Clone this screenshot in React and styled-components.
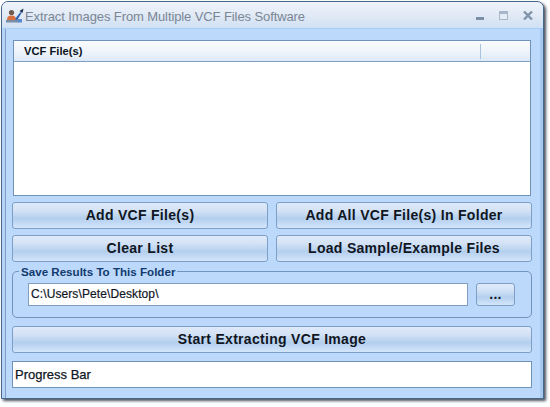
import React from "react";
import styled, { createGlobalStyle } from "styled-components";

const Global = createGlobalStyle`
  html, body { margin: 0; padding: 0; background: #fff; width: 550px; height: 407px; overflow: hidden; }
  #root { width: 550px; height: 407px; }
`;

const Page = styled.div`
  width: 550px;
  height: 407px;
  padding: 1px 0 0 1px;
  box-sizing: border-box;
  font-family: "Liberation Sans", Arial, sans-serif;
`;

const Win = styled.div`
  width: 543px;
  height: 398px;
  box-sizing: border-box;
  border: 1px solid #46668a;
  border-radius: 7px 7px 0 0;
  background: #bcd8fb;
  box-shadow: 2px 2px 3px rgba(30, 40, 55, 0.8);
  display: flex;
  flex-direction: column;
  overflow: hidden;
`;

const TitleBar = styled.div`
  height: 27px;
  flex: none;
  box-sizing: border-box;
  display: flex;
  align-items: center;
  padding: 0 10px 0 4px;
  background: linear-gradient(#eef3fa 0%, #e3ebf6 45%, #d9e5f4 75%, #cfe0f6 100%);
  border-bottom: 1px solid #a9cdf5;
`;

const Title = styled.span`
  margin-left: 1px;
  padding-top: 2px;
  flex: 1;
  font-size: 13px;
  letter-spacing: -0.1px;
  color: #7a8694;
  white-space: nowrap;
`;

const Controls = styled.div`
  display: flex;
  align-items: center;
  gap: 15px;
  margin-top: 1px;
`;

const Client = styled.div`
  flex: 1;
  border-left: 3px solid #b5d2f7;
  border-right: 3px solid #a8c8f2;
  padding: 11px 8px 9px 7px;
  display: flex;
  flex-direction: column;
  box-shadow: inset 1px 0 0 #7f9fc6;
`;

const List = styled.div`
  height: 156px;
  margin: 0 1px;
  box-sizing: border-box;
  border: 1px solid #6f92b8;
  background: #fff;
`;

const ListHead = styled.div`
  height: 21px;
  box-sizing: border-box;
  display: flex;
  align-items: center;
  background: linear-gradient(#f9fbfe 0%, #eef4fb 55%, #dde9f7 100%);
  border-bottom: 1px solid #7f9fc0;
`;

const HeadCell = styled.div`
  flex: ${(p) => (p.$grow ? 1 : "none")};
  width: ${(p) => (p.$grow ? "auto" : "49px")};
  height: 15px;
  padding-left: 10px;
  box-sizing: border-box;
  font-size: 11.2px;
  font-weight: bold;
  line-height: 15px;
  color: #0c1420;
  border-right: ${(p) => (p.$grow ? "1px solid #a9c3df" : "none")};
`;

const ButtonGrid = styled.div`
  display: grid;
  grid-template-columns: 256px 256px;
  column-gap: 8px;
  row-gap: 6px;
  margin-top: 6px;
`;

const Btn = styled.div`
  height: ${(p) => p.$h || 27}px;
  width: ${(p) => (p.$w ? `${p.$w}px` : "auto")};
  box-sizing: border-box;
  border: 1px solid #7d9fc6;
  border-radius: 3px;
  display: flex;
  align-items: center;
  justify-content: center;
  font-size: 14px;
  font-weight: bold;
  letter-spacing: 0.3px;
  color: #10161f;
  padding-bottom: 2px;
  background: linear-gradient(#dfeafa 0%, #d3e2f5 30%, #b4cfee 62%, #c4daf5 82%, #d4e6fb 100%);
`;

const Group = styled.div`
  position: relative;
  margin-top: 9px;
  height: 47px;
  box-sizing: border-box;
  border: 1px solid #7295bd;
  border-radius: 5px;
  display: flex;
  align-items: center;
  gap: 8px;
  padding: 0 16px 0 15px;
`;

const Legend = styled.span`
  position: absolute;
  left: 6px;
  top: -8px;
  padding: 0 2px;
  background: #bcd8fb;
  font-size: 11.6px;
  font-weight: bold;
  line-height: 15px;
  color: #123a6e;
`;

const PathInput = styled.div`
  width: 440px;
  height: 23px;
  box-sizing: border-box;
  border: 1px solid #7f9fc0;
  background: #fff;
  padding-left: 2px;
  font-size: 12px;
  line-height: 21px;
  font-weight: 500;
  letter-spacing: 0.1px;
  color: #10161f;
  -webkit-text-stroke: 0.2px #10161f;
`;

const StartWrap = styled.div`
  margin-top: 8px;
`;

const Progress = styled.div`
  margin-top: 8px;
  height: 27px;
  box-sizing: border-box;
  border: 1px solid #6f92b8;
  background: #fff;
  padding-left: 2px;
  font-size: 13px;
  line-height: 25px;
  color: #10161f;
  -webkit-text-stroke: 0.25px #10161f;
`;

const AppIcon = () => (
  <svg width="18" height="15" viewBox="0 0 18 15">
    <circle cx="5.5" cy="4.5" r="2.6" fill="#6f5a50" />
    <path d="M1 12c0-3.5 1.8-4.6 4.5-4.6S10 8.5 10 12z" fill="#d8703f" />
    <path d="M0 12h13v2.5H0z" fill="#7a8da6" />
    <path d="M9 11l5.5-7 1 1L11 12.5z" fill="#2a62b6" />
    <path d="M13.5 3L17.5 0.5 16.5 5z" fill="#1b2a44" />
    <path d="M12 11h4v3.5h-4z" fill="#5b8ad0" />
  </svg>
);

const WinControls = () => (
  <Controls>
    <svg width="8" height="9" viewBox="0 0 8 9">
      <rect x="0" y="6" width="8" height="3" fill="#7d8fa6" />
    </svg>
    <svg width="9" height="9" viewBox="0 0 9 9">
      <rect x="0.5" y="0.5" width="8" height="8" fill="#e4ecf6" stroke="#a8b6c8" />
      <rect x="1" y="1" width="7" height="2" fill="#a8b6c8" />
    </svg>
    <svg width="10" height="9" viewBox="0 0 10 9">
      <path d="M1 0.5l8 8M9 0.5l-8 8" stroke="#8093aa" strokeWidth="2.4" />
    </svg>
  </Controls>
);

export default function App() {
  return (
    <Page>
      <Global />
      <Win>
        <TitleBar>
          <AppIcon />
          <Title>Extract Images From Multiple VCF Files Software</Title>
          <WinControls />
        </TitleBar>
        <Client>
          <List>
            <ListHead>
              <HeadCell $grow>VCF File(s)</HeadCell>
              <HeadCell />
            </ListHead>
          </List>
          <ButtonGrid>
            <Btn>Add VCF File(s)</Btn>
            <Btn>Add All VCF File(s) In Folder</Btn>
            <Btn>Clear List</Btn>
            <Btn>Load Sample/Example Files</Btn>
          </ButtonGrid>
          <Group>
            <Legend>Save Results To This Folder</Legend>
            <PathInput>C:\Users\Pete\Desktop\</PathInput>
            <Btn $w={39} $h={23}>...</Btn>
          </Group>
          <StartWrap>
            <Btn>Start Extracting VCF Image</Btn>
          </StartWrap>
          <Progress>Progress Bar</Progress>
        </Client>
      </Win>
    </Page>
  );
}
